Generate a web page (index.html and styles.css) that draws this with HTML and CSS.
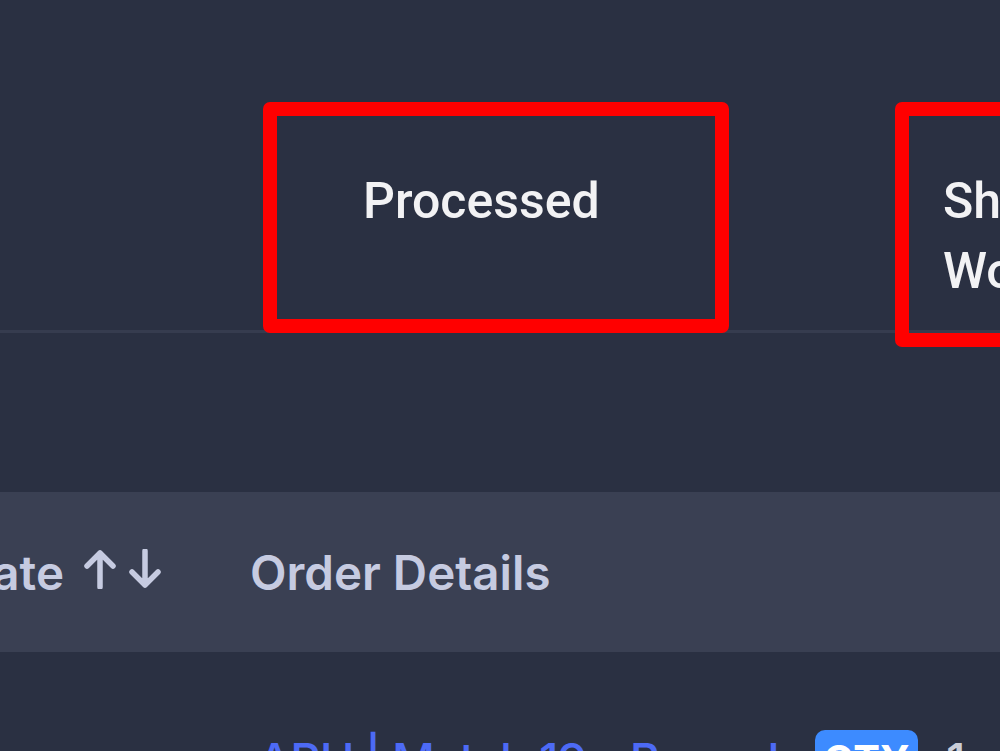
FILE: index.html
```html
<!DOCTYPE html>
<html lang="en">
<head>
<meta charset="utf-8">
<title>Orders</title>
<link rel="stylesheet" href="styles.css">
</head>
<body>
<div class="page">
  <section class="status-bar">
    <div class="status-spacer"></div>
    <div class="status status-processed"><span class="status-label">Processed</span></div>
    <div class="status status-shipped"><span class="status-label">Shipped Worldwide</span></div>
  </section>

  <section class="table">
    <div class="thead">
      <div class="th th-date">
        <span>Date</span>
        <span class="sort">
          <svg class="arrow" viewBox="0 0 34 40" width="34" height="40"><path d="M17 38 V4 M4 17 L17 4 L30 17" fill="none" stroke="currentColor" stroke-width="5.5" stroke-linecap="round" stroke-linejoin="round"/></svg>
          <svg class="arrow" viewBox="0 0 34 40" width="34" height="40"><path d="M17 2 V36 M4 23 L17 36 L30 23" fill="none" stroke="currentColor" stroke-width="5.5" stroke-linecap="round" stroke-linejoin="round"/></svg>
        </span>
      </div>
      <div class="th th-details">Order Details</div>
    </div>
    <div class="tr">
      <div class="td td-details">
        <a class="order-link">ARU | Match 19 - Bengaluru vs Mumbai</a>
      </div>
      <span class="badge">QTY</span>
      <span class="qty">1</span>
    </div>
  </section>
</div>
</body>
</html>
```

FILE: styles.css
```css
html, body {
  margin: 0;
  padding: 0;
}
body {
  background: #2a3042;
  width: 1000px;
  height: 751px;
  overflow: hidden;
}
.page {
  width: 1000px;
  height: 751px;
  overflow: hidden;
}

/* status strip */
.status-bar {
  box-sizing: border-box;
  height: 333px;
  padding-top: 102px;
  display: flex;
  align-items: flex-start;
  border-bottom: 3px solid #363c4f;
  font-family: Roboto, "Liberation Sans", sans-serif;
  font-weight: 500;
  font-size: 50px;
  line-height: 70px;
  color: #f2f2f4;
}
.status-spacer {
  width: 263px;
  flex: none;
}
.status {
  box-sizing: border-box;
  border: 14px solid #ff0000;
  border-radius: 7px;
  flex: none;
}
.status-processed {
  width: 466px;
  height: 231px;
  padding: 50px 0 0 86px;
}
.status-shipped {
  margin-left: 166px;
  width: 300px;
  height: 245px;
  padding: 50px 0 0 34px;
}
.status-label {
  display: block;
}

/* table */
.table {
  margin-top: 159px;
  font-family: Inter, "Noto Sans", sans-serif;
}
.thead {
  height: 160px;
  background: #3a4053;
  display: flex;
  align-items: center;
  color: #c6cbe1;
  font-weight: 600;
  font-size: 47.5px;
  white-space: nowrap;
}
.th-date {
  margin-left: -42px;
  display: flex;
  align-items: center;
  width: 292px;
  flex: none;
}
.sort {
  display: flex;
  gap: 11px;
  margin-left: 19px;
  margin-top: -6px;
}
.arrow {
  display: block;
}
.th-details {
  flex: none;
}

.tr {
  display: flex;
  align-items: flex-start;
  height: 99px;
  overflow: hidden;
  white-space: nowrap;
  font-size: 47px;
  font-weight: 500;
}
.td-details {
  margin-left: 258px;
  width: 557px;
  flex: none;
  padding-top: 79px;
  overflow: hidden;
}
.order-link {
  color: #4d6af5;
  letter-spacing: -1px;
}
.badge {
  margin-top: 78px;
  width: 103px;
  height: 60px;
  border-radius: 10px;
  background: #3d8bff;
  color: #ffffff;
  font-size: 40px;
  font-weight: 700;
  text-align: center;
  line-height: 60px;
  flex: none;
}
.qty {
  margin-left: 28px;
  padding-top: 79px;
  color: #c9cdd8;
}
```
